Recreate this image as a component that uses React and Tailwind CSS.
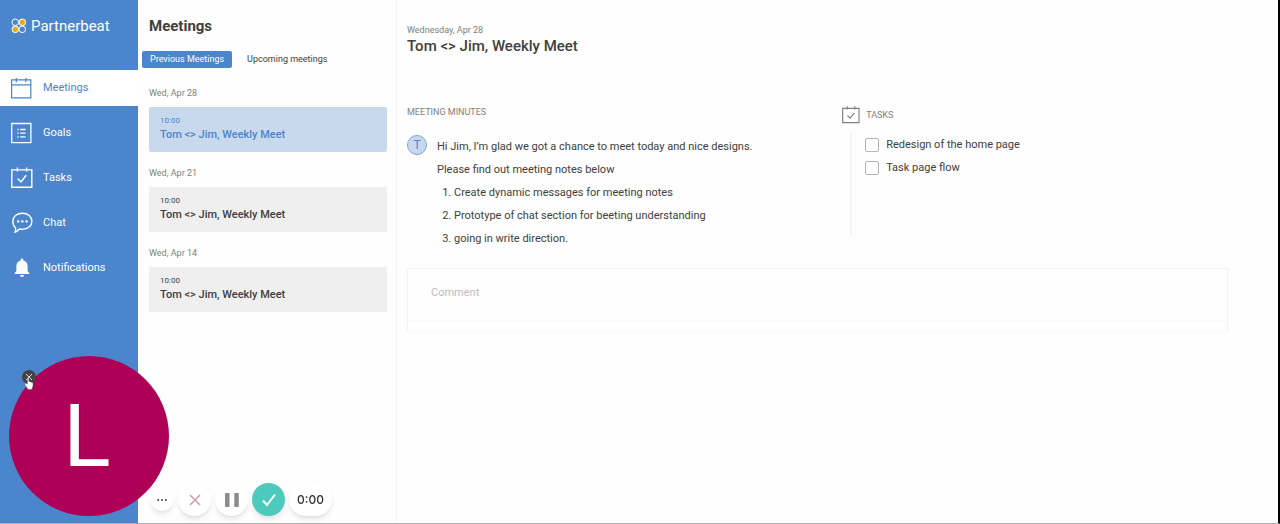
const BellIcon = () => (
  <svg width="22" height="22" viewBox="0 0 22 22" fill="currentColor">
    <path d="M11 1.600c.8 0 1.400.6 1.400 1.400v.5c2.700.6 4.200 2.700 4.200 5.300v4.200c0 1.200.7 2.200 1.700 3v1H3.700v-1c1-.8 1.700-1.800 1.700-3V8.800c0-2.600 1.500-4.700 4.200-5.300V3c0-.8.6-1.400 1.400-1.400z" />
    <path d="M8.800 18h4.400c-.2 1.200-1.100 2-2.200 2s-2-.8-2.200-2z" />
  </svg>
);

const MeetingsIcon = () => (
  <svg width="22" height="22" viewBox="0 0 22 22" fill="none" stroke="currentColor" strokeWidth="1.2">
    <path d="M.6 2.900h19.200v18H.6zM.6 7.800h19.200M5.300 1v4.200M14.900 1v4.200" />
  </svg>
);

const GoalsIcon = () => (
  <svg width="22" height="22" viewBox="0 0 22 22" fill="none" stroke="currentColor" strokeWidth="1.300">
    <path d="M.7 1.500h19.200v19.200H.7z" />
    <path d="M9.300 7.500h5.200M9.300 11.200h5.200M9.300 14.900h5.200M6.400 7.500h1.400M6.400 11.200h1.400M6.400 14.900h1.400" />
  </svg>
);

const TasksIcon = ({ size = 22 }) => (
  <svg width={size} height={size} viewBox="0 0 22 22" fill="none" stroke="currentColor" strokeWidth="1.400">
    <path d="M.8 2.900h20v17.400H.8zM6.400.4v4M15.600.4v4M6.600 11.500l3.400 3.400 5.200-6.600" />
  </svg>
);

const ChatIcon = () => (
  <svg width="22" height="22" viewBox="0 0 22 22" fill="none" stroke="currentColor" strokeWidth="1.400">
    <path d="M11.400 1.200c5.500 0 9.500 3.500 9.500 8.100s-4 8.100-9.500 8.100c-1 0-2-.1-2.900-.4-1.300 1.500-2.600 2.600-4.400 3 .6-1.300.7-2.800.4-4.200-1.800-1.500-2.700-3.800-2.700-6.500 0-4.600 4.100-8.100 9.600-8.100z" />
    <g fill="currentColor" stroke="none">
      <circle cx="7.200" cy="9.400" r="1.200" />
      <circle cx="11.400" cy="9.400" r="1.200" />
      <circle cx="15.600" cy="9.400" r="1.200" />
    </g>
  </svg>
);

const Logo = () => (
  <svg width="16" height="16" viewBox="0 0 16 16" stroke="#fff" strokeWidth="1">
    <circle cx="4.300" cy="4.300" r="3.300" fill="#4b85cb" />
    <circle cx="11.300" cy="11.300" r="3.300" fill="#4b85cb" />
    <circle cx="11.300" cy="4.300" r="3.300" fill="#e8ab14" />
    <circle cx="4.300" cy="11.300" r="3.300" fill="#e8ab14" />
  </svg>
);

const NAV = [
  { label: "Meetings", icon: MeetingsIcon, active: true },
  { label: "Goals", icon: GoalsIcon },
  { label: "Tasks", icon: TasksIcon },
  { label: "Chat", icon: ChatIcon },
  { label: "Notifications", icon: BellIcon },
];

const MEETINGS = [
  { date: "Wed, Apr 28", active: true },
  { date: "Wed, Apr 21" },
  { date: "Wed, Apr 14" },
];

const NOTES = [
  "Create dynamic messages for meeting notes",
  "Prototype of chat section for beeting understanding",
  "going in write direction.",
];

const TASKS = ["Redesign of the home page", "Task page flow"];

function Sidebar() {
  return (
    <aside className="w-[138px] shrink-0 bg-[#4b85cb] text-white">
      <div className="flex h-[70px] items-start gap-1 pl-[11px] pt-4 text-[15px] leading-5">
        <span className="pt-0.5">
          <Logo />
        </span>
        Partnerbeat
      </div>
      <nav className="flex flex-col gap-[9px]">
        {NAV.map(({ label, icon: Icon, active }) => (
          <a
            key={label}
            href="#"
            className={`flex h-9 items-center gap-[10px] pl-[11px] text-[11px] leading-4 ${
              active ? "bg-white text-[#4b85cb]" : ""
            }`}
          >
            <Icon />
            {label}
          </a>
        ))}
      </nav>
    </aside>
  );
}

function MeetingList() {
  return (
    <section className="w-[258px] shrink-0 pl-[11px] pr-[9px]">
      <h1 className="pt-4 text-[15px] font-bold leading-5">Meetings</h1>
      <div className="-ml-[7px] mt-[15px] flex gap-[7px] text-[9px] leading-[17px]">
        <button className="rounded-xs bg-[#4b85cb] px-2 text-white">
          Previous Meetings
        </button>
        <button className="px-2">Upcoming meetings</button>
      </div>
      <div className="mt-[17px] space-y-[13px]">
        {MEETINGS.map((m) => (
          <div key={m.date}>
            <p className="text-[9px] leading-4 text-[#808080]">{m.date}</p>
            <button
              className={`mt-[6px] block w-full rounded-xs px-[11px] pb-[9px] pt-2 text-left ${
                m.active ? "bg-[#c9d9ed] text-[#4b85cb]" : "bg-[#efefef]"
              }`}
            >
              <span className="block text-[8px] leading-3">10:00</span>
              <span className="block text-[11px] font-medium leading-4">
                Tom &lt;&gt; Jim, Weekly Meet
              </span>
            </button>
          </div>
        ))}
      </div>
    </section>
  );
}

function MeetingDetail() {
  return (
    <main className="min-w-0 flex-1 border-l border-[#f5f5f5] pl-[10px] pr-[50px] pt-[22px]">
      <p className="text-[9px] leading-4 text-[#808080]">Wednesday, Apr 28</p>
      <h2 className="text-[15px] font-medium leading-4">
        Tom &lt;&gt; Jim, Weekly Meet
      </h2>

      <div className="mt-[50px] grid grid-cols-[53fr_47fr]">
        <section>
          <h3 className="text-[9px] leading-4 text-[#808080]">MEETING MINUTES</h3>
          <div className="mt-[15px] flex gap-[10px]">
            <span className="flex size-5 shrink-0 items-center justify-center rounded-full border border-[#7ba5da] bg-[#c9d9ed] text-[12px] text-[#4b85cb]">
              T
            </span>
            <div className="text-[11px] leading-[23px]">
              <p>Hi Jim, I’m glad we got a chance to meet today and nice designs.</p>
              <p>Please find out meeting notes below</p>
              <ol className="list-decimal pl-[17px]">
                {NOTES.map((n) => (
                  <li key={n}>{n}</li>
                ))}
              </ol>
            </div>
          </div>
        </section>

        <section>
          <h3 className="flex items-center gap-[6px] pt-px text-[9px] leading-5 text-[#808080]">
            <TasksIcon size={18} />
            TASKS
          </h3>
          <ul className="ml-2 mt-2 h-[102px] border-l-2 border-[#f5f5f5] pl-[13px]">
            {TASKS.map((t) => (
              <li key={t}>
                <label className="flex items-center gap-[7px] text-[11px] leading-[23px]">
                  <input
                    type="checkbox"
                    className="size-[14px] appearance-none rounded-xs border border-[#b5b5b5] bg-white"
                  />
                  {t}
                </label>
              </li>
            ))}
          </ul>
        </section>
      </div>

      <div className="mt-[18px] border border-[#f3f3f3] border-b-[#f8f8f8] pb-[10px]">
        <textarea
          aria-label="Comment"
          placeholder="Comment"
          className="block h-[52px] w-full resize-none border-b border-[#fafafa] px-[23px] pt-[14px] text-[11px] leading-5 outline-none placeholder:text-[#bdbdbd]"
        />
      </div>
    </main>
  );
}

function Recorder() {
  return (
    <>
      <div className="fixed bottom-2 left-[9px] flex size-40 items-center justify-center rounded-full bg-[#af0058] pr-1 text-[88px] leading-none text-white">
        L
        <button
          aria-label="Close camera"
          className="absolute left-[13px] top-[14px] flex size-[14px] items-center justify-center rounded-full bg-[#444]"
        >
          <svg width="8" height="8" viewBox="0 0 8 8" stroke="#ddd" strokeWidth="1">
            <path d="M1 1l6 6M7 1L1 7" />
          </svg>
        </button>
        <svg
          width="10"
          height="13"
          viewBox="0 0 10 13"
          className="absolute left-[15px] top-[21px]"
          fill="#fff"
          stroke="#555"
          strokeWidth=".5"
        >
          <path d="M3.300 7V1.500c0-1.200 1.600-1.200 1.600 0v3.200c.5-.5 1.300-.3 1.500.3.600-.3 1.200 0 1.300.5.700-.2 1.300.2 1.300.9v2.400c0 1-.7 1.800-.9 2.600v1H3.400v-1C2.300 10 1.400 8.700.7 7.500c-.4-1 .6-1.500 1.200-.9z" />
        </svg>
      </div>

      <div className="fixed bottom-2 left-[151px] flex items-center gap-1">
        <button
          aria-label="More"
          className="mr-px flex size-[22px] items-center justify-center rounded-full bg-white shadow-md"
        >
          <svg width="10" height="2" viewBox="0 0 10 2" fill="#444">
            <circle cx="1.200" cy="1" r="1" />
            <circle cx="5" cy="1" r="1" />
            <circle cx="8.800" cy="1" r="1" />
          </svg>
        </button>
        <button
          aria-label="Cancel"
          className="flex size-[33px] items-center justify-center rounded-full bg-white shadow-md"
        >
          <svg width="12" height="12" viewBox="0 0 12 12" stroke="#d898a8" strokeWidth="1.500">
            <path d="M1 1l10 10M11 1L1 11" />
          </svg>
        </button>
        <button
          aria-label="Pause"
          className="flex size-[33px] items-center justify-center rounded-full bg-white shadow-md"
        >
          <svg width="14" height="14" viewBox="0 0 14 14" fill="#8c8c8c">
            <rect x="0" y="0" width="4.500" height="14" rx=".8" />
            <rect x="9.300" y="0" width="4.500" height="14" rx=".8" />
          </svg>
        </button>
        <button
          aria-label="Finish"
          className="flex size-[33px] items-center justify-center rounded-full bg-[#4ccbbd] shadow-md"
        >
          <svg width="14" height="14" viewBox="0 0 14 14" fill="none" stroke="#fff" strokeWidth="2">
            <path d="M1 7.500l4 4.500L13 1.500" />
          </svg>
        </button>
        <span className="flex h-[33px] items-center rounded-full bg-white px-2 font-[Inter,sans-serif] text-[12px] font-medium text-[#333] shadow-md">
          0:00
        </span>
      </div>
    </>
  );
}

export default function App() {
  return (
    <div className="flex min-h-screen border-b border-r-2 border-b-[#b0b0b0] border-r-black bg-[#fefefe] font-[Roboto,sans-serif] text-[#404040]">
      <Sidebar />
      <MeetingList />
      <MeetingDetail />
      <Recorder />
    </div>
  );
}
